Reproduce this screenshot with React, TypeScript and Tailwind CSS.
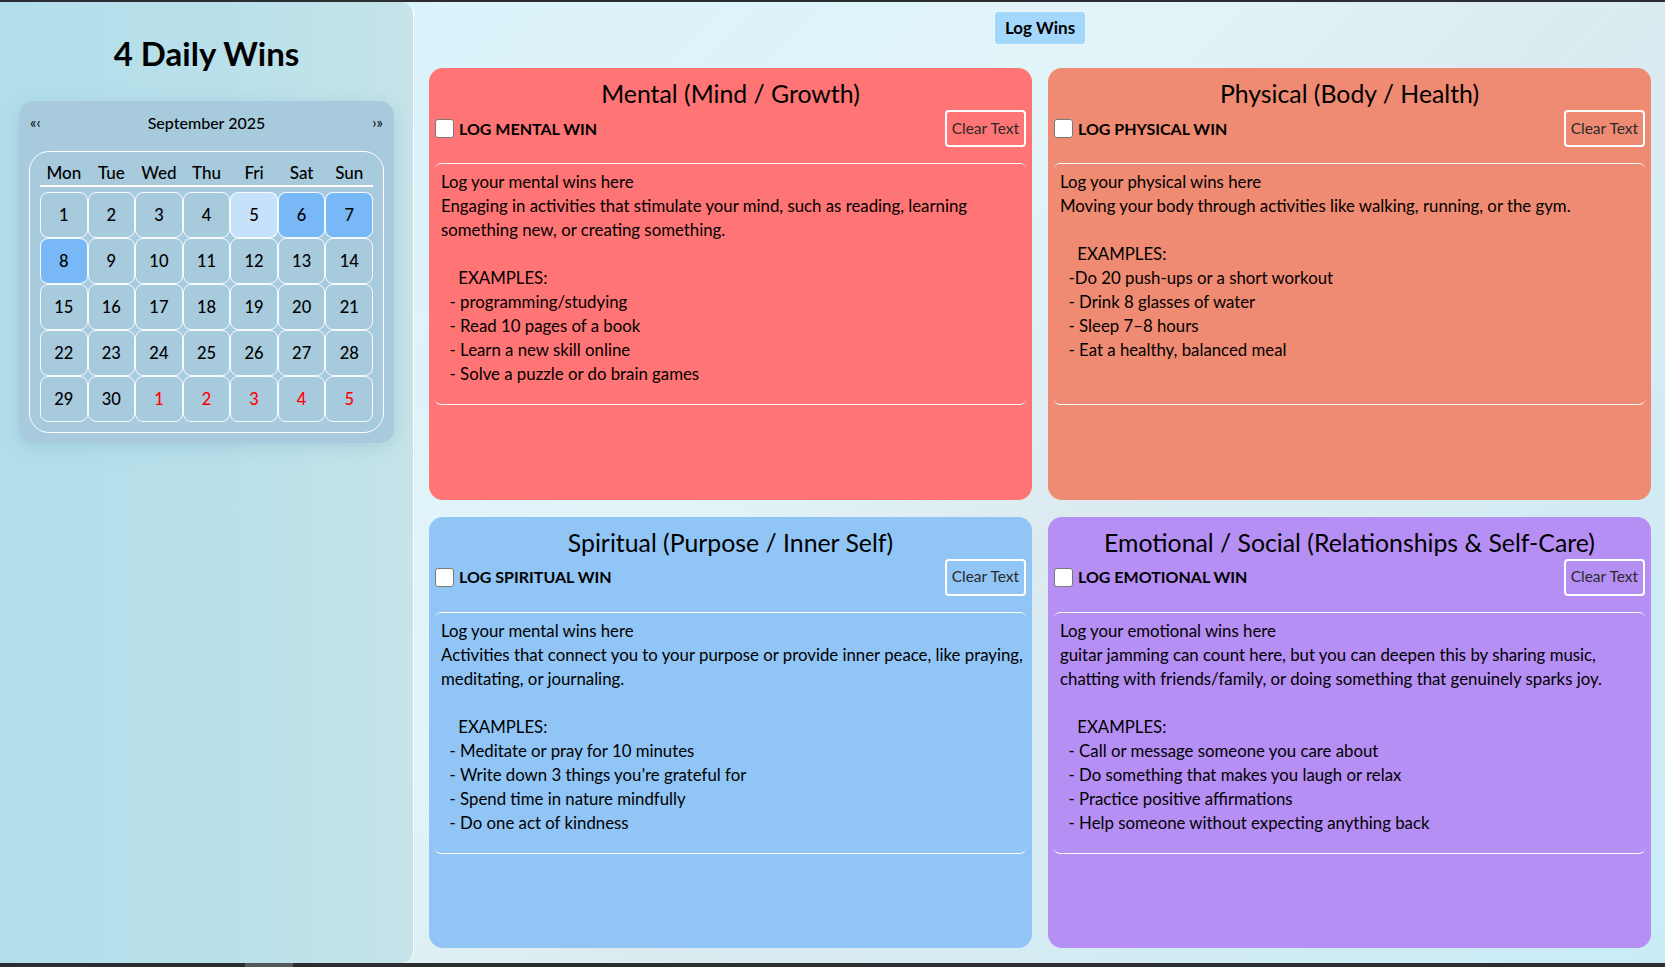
import React from "react";

const FONT = { fontFamily: '"Segoe UI", Lato, "Noto Sans", sans-serif' };

type Card = {
  title: string;
  label: string;
  bg: string;
  lines: string[];
};

const cards: Card[] = [
  {
    title: "Mental (Mind / Growth)",
    label: "LOG MENTAL WIN",
    bg: "bg-[#ff7474]",
    lines: [
      "Log your mental wins here",
      "Engaging in activities that stimulate your mind, such as reading, learning",
      "something new, or creating something.",
      "",
      "    EXAMPLES:",
      "  - programming/studying",
      "  - Read 10 pages of a book",
      "  - Learn a new skill online",
      "  - Solve a puzzle or do brain games",
    ],
  },
  {
    title: "Physical (Body / Health)",
    label: "LOG PHYSICAL WIN",
    bg: "bg-[#ef8b73]",
    lines: [
      "Log your physical wins here",
      "Moving your body through activities like walking, running, or the gym.",
      "",
      "    EXAMPLES:",
      "  -Do 20 push-ups or a short workout",
      "  - Drink 8 glasses of water",
      "  - Sleep 7\u20138 hours",
      "  - Eat a healthy, balanced meal",
    ],
  },
  {
    title: "Spiritual (Purpose / Inner Self)",
    label: "LOG SPIRITUAL WIN",
    bg: "bg-[#91c5f5]",
    lines: [
      "Log your mental wins here",
      "Activities that connect you to your purpose or provide inner peace, like praying,",
      "meditating, or journaling.",
      "",
      "    EXAMPLES:",
      "  - Meditate or pray for 10 minutes",
      "  - Write down 3 things you\u2019re grateful for",
      "  - Spend time in nature mindfully",
      "  - Do one act of kindness",
    ],
  },
  {
    title: "Emotional / Social (Relationships & Self-Care)",
    label: "LOG EMOTIONAL WIN",
    bg: "bg-[#b68ff4]",
    lines: [
      "Log your emotional wins here",
      "guitar jamming can count here, but you can deepen this by sharing music,",
      "chatting with friends/family, or doing something that genuinely sparks joy.",
      "",
      "    EXAMPLES:",
      "  - Call or message someone you care about",
      "  - Do something that makes you laugh or relax",
      "  - Practice positive affirmations",
      "  - Help someone without expecting anything back",
    ],
  },
];

const weekdays = ["Mon", "Tue", "Wed", "Thu", "Fri", "Sat", "Sun"];

type Day = { n: number; other?: boolean; kind?: "today" | "active" };

const days: Day[] = [
  ...Array.from({ length: 30 }, (_, i) => ({ n: i + 1 } as Day)),
  ...[1, 2, 3, 4, 5].map((n) => ({ n, other: true } as Day)),
];
days[4].kind = "today";
days[5].kind = "active";
days[6].kind = "active";
days[7].kind = "active";

function WinCard({ card }: { card: Card }) {
  return (
    <div className={`${card.bg} rounded-[14px] flex flex-col px-[6px] pt-[9px] overflow-hidden`}>
      <div className="text-center text-[24.8px] leading-[33px] text-black">{card.title}</div>
      <div className="h-[37px] flex items-center justify-between">
        <label className="flex items-center gap-[5px]">
          <span className="w-[19px] h-[19px] bg-white border border-[#7a7a7a] rounded-[3px]" />
          <span className="font-bold text-[16px] text-black">{card.label}</span>
        </label>
        <button className="h-[37px] px-[5px] border-2 border-white rounded-[4px] text-[15.5px] text-[#2a2a2a]">
          Clear Text
        </button>
      </div>
      <div className="mt-[16px] h-[242px] border-y border-white rounded-[6px] px-[6px] pt-[6px] text-[16.8px] leading-[24px] text-black whitespace-pre">
        {card.lines.map((l, i) => (
          <div key={i} className="h-[24px]">
            {l}
          </div>
        ))}
      </div>
    </div>
  );
}

function Calendar() {
  return (
    <div className="mx-[19px] mt-[28px] rounded-[15px] bg-[#a7cadd] shadow-[0_4px_18px_rgba(120,170,190,0.35)] px-[10px] pt-[8px] pb-[10px]">
      <div className="h-[27px] flex items-center justify-between px-[1px] text-black">
        <span className="text-[15px] leading-none">{"\u00AB\u2039"}</span>
        <span className="text-[16px] font-medium">September 2025</span>
        <span className="text-[15px] leading-none">{"\u203A\u00BB"}</span>
      </div>
      <div className="mt-[15px] border border-white rounded-[20px] px-[10px] pt-[10px] pb-[10px]">
        <div className="grid grid-cols-7 h-[25px] border-b-2 border-white">
          {weekdays.map((w) => (
            <div key={w} className="text-center text-[17px] leading-[22px] font-medium text-black">
              {w}
            </div>
          ))}
        </div>
        <div className="mt-[5px] grid grid-cols-7 grid-rows-5">
          {days.map((d, i) => (
            <div
              key={i}
              className={`h-[46px] flex items-center justify-center border border-white/90 rounded-[8px] text-[16.5px] font-medium ${
                d.kind === "today" ? "bg-[#c6e2fb]" : d.kind === "active" ? "bg-[#79b8f7]" : ""
              } ${d.other ? "text-[#ff0000]" : "text-black"}`}
            >
              {d.n}
            </div>
          ))}
        </div>
      </div>
    </div>
  );
}

export default function App() {
  return (
    <div className="w-full h-[967px] bg-[#2b2d31] flex flex-col overflow-hidden" style={FONT}>
      <div className="h-[2px] shrink-0" />
      <div className="flex-1 flex min-h-0 bg-[linear-gradient(135deg,#d6f2fc_0%,#e2f4f8_45%,#dcebf0_60%,#c8ecf7_100%)]">
        <aside className="w-[414px] shrink-0 rounded-r-[12px] border-r border-white bg-gradient-to-r from-[#b2deea] via-[#b8e0ea] to-[#c6e4ea] flex flex-col">
          <h1 className="mt-[31px] text-center text-[33px] leading-[40px] font-bold text-black">4 Daily Wins</h1>
          <Calendar />
        </aside>
        <main className="flex-1 flex flex-col items-center pl-[15px] pr-[14px] pb-[15px]">
          <button className="mt-[9px] h-[34px] px-[10px] bg-[#a3d7fc] border border-white/80 rounded-[4px] text-[17px] font-bold text-black">
            Log Wins
          </button>
          <div className="mt-[23px] w-full flex-1 grid grid-cols-2 grid-rows-2 gap-x-[16px] gap-y-[17px]">
            {cards.map((c) => (
              <WinCard key={c.title} card={c} />
            ))}
          </div>
        </main>
      </div>
      <div className="h-[4px] shrink-0 flex">
        <div className="w-[245px]" />
        <div className="w-[48px] bg-[#55585c]" />
      </div>
    </div>
  );
}
